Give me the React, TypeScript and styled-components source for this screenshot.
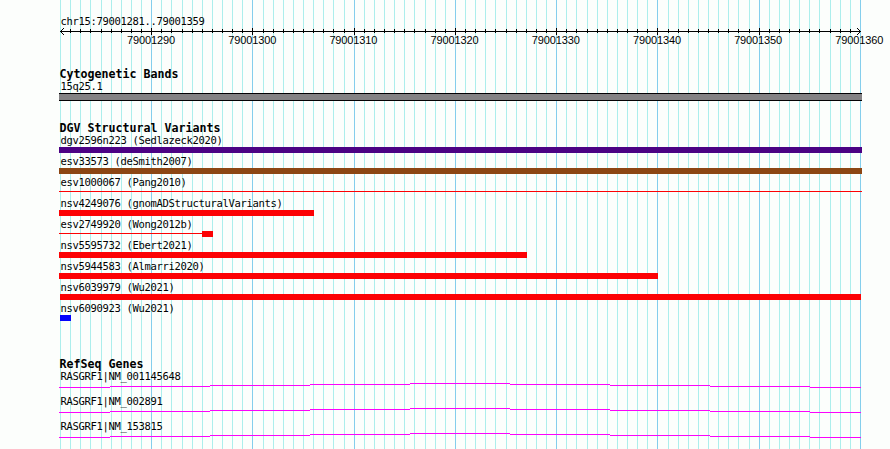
import styled, { createGlobalStyle } from "styled-components";

const GlobalStyle = createGlobalStyle`
  body {
    margin: 0;
    background-color: #fcfefc;
  }
`;

const START = 79001281;
const END = 79001360;
const LEFT = 60;
const SPAN = 800;

const MINOR = "#aceeec";
const MAJOR = "#84ceec";

const ticks = Array.from({ length: END - START + 1 }, (_, i) => ({
  pos: START + i,
  x: LEFT + Math.round((i * SPAN) / (END - START)),
  major: (START + i) % 10 === 0,
}));

const majorTicks = ticks.filter((tick) => tick.major);

interface Variant {
  name: string;
  color: string;
  start: number;
  width: number;
  // thin line drawn before the box
  lead?: number;
  thin?: boolean;
}

const variants: Variant[] = [
  { name: "dgv2596n223 (Sedlazeck2020)", color: "#4c0284", start: 0, width: 803 },
  { name: "esv33573 (deSmith2007)", color: "#8c4614", start: 0, width: 803 },
  { name: "esv1000067 (Pang2010)", color: "#fc0204", start: 0, width: 803, thin: true },
  { name: "nsv4249076 (gnomADStructuralVariants)", color: "#fc0204", start: 0, width: 255 },
  { name: "esv2749920 (Wong2012b)", color: "#fc0204", start: 0, width: 11, lead: 143 },
  { name: "nsv5595732 (Ebert2021)", color: "#fc0204", start: 0, width: 468 },
  { name: "nsv5944583 (Almarri2020)", color: "#fc0204", start: 0, width: 599 },
  { name: "nsv6039979 (Wu2021)", color: "#fc0204", start: 1, width: 801 },
  { name: "nsv6090923 (Wu2021)", color: "#0402fc", start: 1, width: 11 },
];

const genes = ["RASGRF1|NM_001145648", "RASGRF1|NM_002891", "RASGRF1|NM_153815"];

const Browser = styled.main`
  position: relative;
  width: 890px;
  height: 449px;
  overflow: hidden;
  background-color: #fcfefc;
  color: #000;
  font-family: "DejaVu Sans Mono", "Liberation Mono", monospace;
`;

const Grid = styled.svg`
  position: absolute;
  inset: 0;
`;

const Content = styled.div`
  position: relative;
  display: flex;
  flex-direction: column;
  padding-top: 15px;
`;

const Label = styled.div`
  height: 12px;
  padding-left: 60.4px;
  font-size: 10.5px;
  letter-spacing: -0.321px;
  line-height: 12px;
  white-space: pre;
`;

const Ruler = styled.svg`
  display: block;
  margin-top: 1px;
`;

const Scale = styled.div`
  display: flex;
  gap: 53.2px;
  height: 12px;
  padding-left: 127px;
  font-family: "Liberation Sans", Arial, sans-serif;
  font-size: 11px;
  letter-spacing: -0.118px;
  line-height: 10px;
`;

const ScaleValue = styled.span`
  flex: none;
  width: 48px;
`;

const Track = styled.section<{ $gap: number }>`
  margin-top: ${({ $gap }) => $gap}px;
`;

const Title = styled.h2`
  height: 12px;
  margin: 0;
  padding-left: 59.5px;
  font-size: 11.63px;
  font-weight: bold;
  line-height: 13px;
  white-space: pre;
`;

const Band = styled.div`
  box-sizing: border-box;
  width: 803px;
  height: 8px;
  margin: 1px 0 0 59px;
  border: solid #040204;
  border-width: 1px 0;
  background-color: #848284;
`;

const VariantRow = styled.div`
  height: 21px;
`;

const Glyph = styled.div<{ $start: number }>`
  display: flex;
  align-items: center;
  height: 6px;
  margin-top: 1px;
  margin-left: ${({ $start }) => 59 + $start}px;
`;

const Bar = styled.div<{ $width: number; $color: string; $thin?: boolean }>`
  width: ${({ $width }) => $width}px;
  height: ${({ $thin }) => ($thin ? 1 : 6)}px;
  margin-top: ${({ $thin }) => ($thin ? -1 : 0)}px;
  background-color: ${({ $color }) => $color};
`;

const GeneRow = styled.div`
  height: 25px;
`;

const Intron = styled.svg`
  display: block;
`;

function App() {
  return (
    <>
      <GlobalStyle />
      <Browser>
        <Grid width="890" height="449" shapeRendering="crispEdges">
          {ticks.map(({ pos, x, major }) => (
            <rect key={pos} x={x} y="0" width="1" height="449" fill={major ? MAJOR : MINOR} />
          ))}
        </Grid>
        <Content>
          <Label>chr15:79001281..79001359</Label>
          <Ruler width="890" height="7" shapeRendering="crispEdges">
            <rect x="60" y="3" width="801" height="1" />
            {ticks.slice(1, -1).map(({ pos, x, major }) => (
              <rect key={pos} x={x} y={major ? 0 : 1} width="1" height={major ? 7 : 4} />
            ))}
            <path d="M61 2h1v1h-1zM62 1h1v1h-1zM63 0h1v1h-1zM61 4h1v1h-1zM62 5h1v1h-1zM63 6h1v1h-1z" />
            <path d="M859 2h1v1h-1zM858 1h1v1h-1zM857 0h1v1h-1zM859 4h1v1h-1zM858 5h1v1h-1zM857 6h1v1h-1z" />
          </Ruler>
          <Scale>
            {majorTicks.map(({ pos }) => (
              <ScaleValue key={pos}>{pos}</ScaleValue>
            ))}
          </Scale>

          <Track $gap={21}>
            <Title>Cytogenetic Bands</Title>
            <Label>15q25.1</Label>
            <Band />
          </Track>

          <Track $gap={21}>
            <Title>DGV Structural Variants</Title>
            {variants.map(({ name, color, start, width, lead, thin }) => (
              <VariantRow key={name}>
                <Label>{name}</Label>
                <Glyph $start={start}>
                  {lead && <Bar $width={lead} $color={color} $thin />}
                  <Bar $width={width} $color={color} $thin={thin} />
                </Glyph>
              </VariantRow>
            ))}
          </Track>

          <Track $gap={35}>
            <Title>RefSeq Genes</Title>
            {genes.map((name) => (
              <GeneRow key={name}>
                <Label>{name}</Label>
                <Intron width="890" height="6" shapeRendering="crispEdges">
                  <path
                    fill="#fc02fc"
                    d="M59 5h51v1h-51zM110 4h100v1h-100zM210 3h100v1h-100zM310 2h100v1h-100zM410 1h100v1h-100zM510 2h100v1h-100zM610 3h100v1h-100zM710 4h100v1h-100zM810 5h51v1h-51z"
                  />
                </Intron>
              </GeneRow>
            ))}
          </Track>
        </Content>
      </Browser>
    </>
  );
}

export default App;
